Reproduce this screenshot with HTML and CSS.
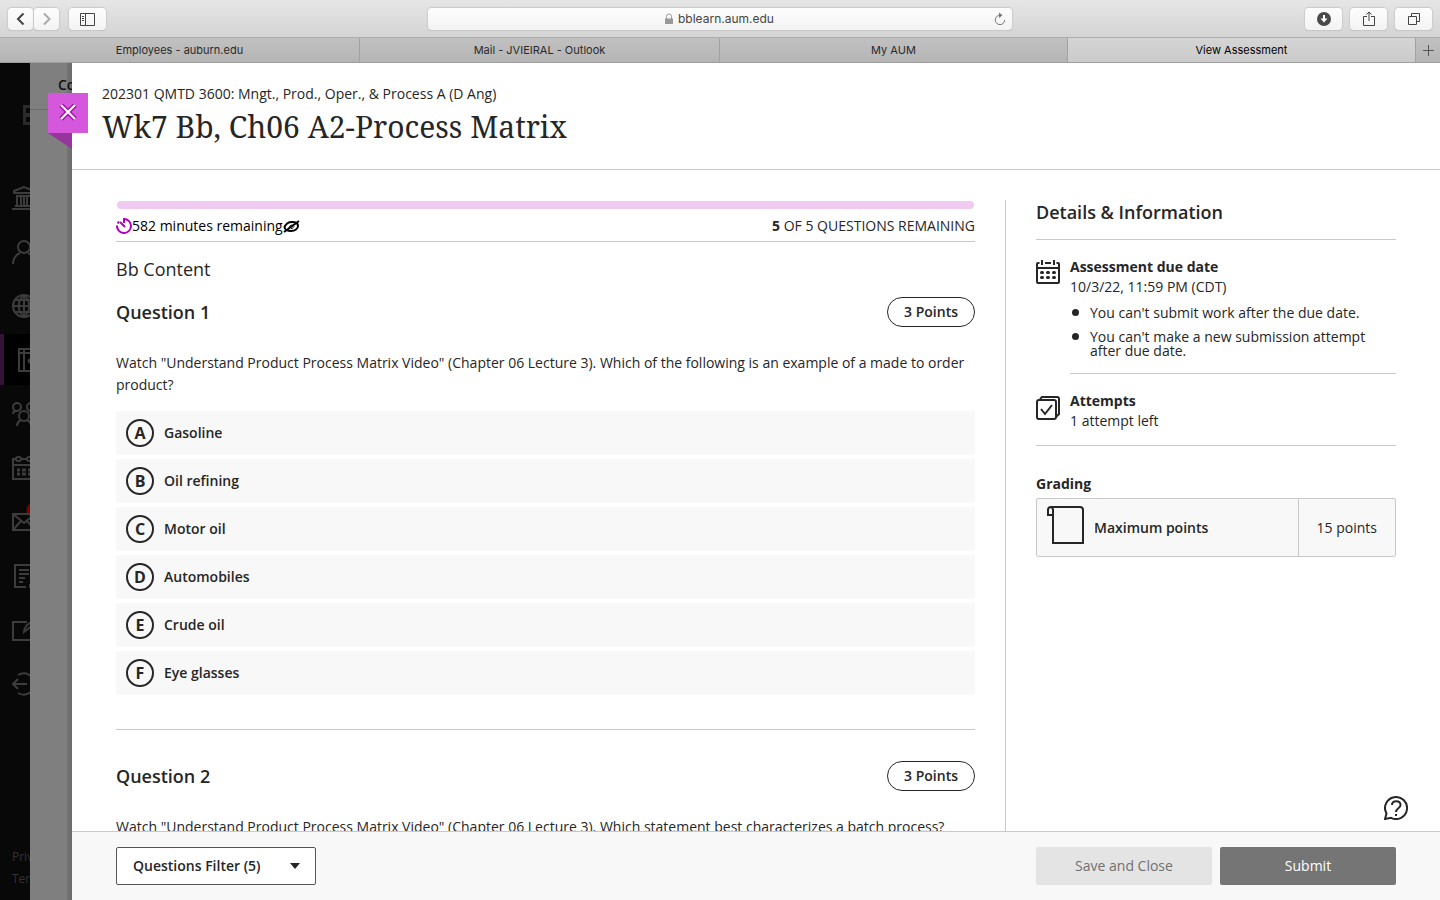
FILE: index.html
```html
<!DOCTYPE html>
<html lang="en">
<head>
  <meta charset="UTF-8">
  <meta name="viewport" content="width=device-width, initial-scale=1">
  <title>View Assessment</title>
  <link rel="stylesheet" href="styles.css">
</head>
<body>

  <!-- Browser chrome -->
  <div class="toolbar">
    <div class="tools">
      <div class="history">
        <button class="tool" aria-label="Back"><svg width="12" height="16" viewBox="0 0 12 16"><path d="M8.500 2.500L3 8L8.500 13.500"/></svg></button>
        <button class="tool forward" aria-label="Forward"><svg width="12" height="16" viewBox="0 0 12 16"><path d="M3 2.500L8.500 8L3 13.500"/></svg></button>
      </div>
      <button class="tool wide" aria-label="Sidebar"><svg class="thin" width="15" height="13" viewBox="0 0 15 13"><path d="M.5 .5h14v12H.5zM5.500 .5v12M2 3.500h2M2 5.500h2M2 7.500h2"/></svg></button>
    </div>
    <div class="address">
      <svg class="lock" width="8" height="12" viewBox="0 0 8 12"><path d="M1.500 6V3.500a2.500 2.500 0 0 1 5 0V6" fill="none" stroke="#999"/><path d="M0 5.500h8V11H0z" fill="#999"/></svg>
      <input class="url" type="text" value="bblearn.aum.edu" aria-label="Address">
      <button class="reload" aria-label="Reload"><svg width="12" height="14" viewBox="0 0 12 14"><path d="M6 3.200a4.700 4.700 0 1 0 4.700 4.700" fill="none" stroke="#777"/><path d="M5 .5L8.500 3.200L5 6z" fill="#777"/></svg></button>
    </div>
    <div class="tools right">
      <button class="tool wide" aria-label="Downloads"><svg width="14" height="14" viewBox="0 0 14 14"><circle cx="7" cy="7" r="7" fill="#4a4a4a" stroke="none"/><path d="M7 3v4" stroke="#fff" stroke-width="2"/><path d="M3.500 6.500h7L7 10.500z" fill="#fff" stroke="none"/></svg></button>
      <button class="tool wide" aria-label="Share"><svg class="thin" width="12" height="16" viewBox="0 0 12 16"><path d="M4 5.500H.5v9h11v-9H8M6 10V1.500M3.500 3.500L6 1l2.500 2.500"/></svg></button>
      <button class="tool wide" aria-label="Tabs"><svg class="thin" width="14" height="14" viewBox="0 0 14 14"><path d="M1.500 4.500h8v8h-8zM4.500 4V1.500h8v8H10"/></svg></button>
    </div>
  </div>
  <nav class="tabs">
    <a href="#" class="tab first">Employees - auburn.edu</a>
    <a href="#" class="tab first">Mail - JVIEIRAL - Outlook</a>
    <a href="#" class="tab">My AUM</a>
    <a href="#" class="tab current">View Assessment</a>
    <button class="new-tab" aria-label="New tab"><svg width="11" height="11" viewBox="0 0 11 11"><path d="M5.500 0v11M0 5.500h11" stroke="#555"/></svg></button>
  </nav>

  <div class="page">
    <aside class="sidebar">
      <svg class="brand" width="24" height="20" viewBox="0 0 24 20"><path d="M0 0h24v20H0z" fill="#2b2b2b"/><path d="M3 3h6v5H3zM3 12h6v5H3z" fill="#080808"/></svg>
      <nav class="menu">
        <a href="#" aria-label="Institution"><svg viewBox="0 0 24 24"><path d="M2 7V5l10-4 10 4v2zM4 10h16M3 20h18M0 23h24M5 10v10M9 10v10M12 10v10M15 10v10M19 10v10"/></svg></a>
        <a href="#" aria-label="Profile"><svg viewBox="0 0 24 24"><circle cx="12" cy="7" r="6"/><path d="M1 24c0-5 3-9 7-11M23 24c0-5-3-9-7-11"/></svg></a>
        <a href="#" aria-label="Activity"><svg viewBox="0 0 24 24"><circle cx="12" cy="12" r="11"/><path d="M1 12h22M12 1v22M3 6h18M3 18h18M12 1c-7 6-7 16 0 22M12 1c7 6 7 16 0 22"/></svg></a>
        <a href="#" class="active" aria-label="Courses"><svg viewBox="0 0 24 24"><path d="M7 1h17v22H7zM7 5h17M12 1v22M18 11h6M18 15h6M16 13l2-2M16 13l2 2"/></svg></a>
        <a href="#" aria-label="Organizations"><svg viewBox="0 0 24 24"><circle cx="5" cy="5" r="4"/><circle cx="19" cy="5" r="4"/><circle cx="12" cy="14" r="5"/><path d="M1 12c0-2 1-3 3-3M23 12c0-2-1-3-3-3M5 24c0-3 2-5 4-6M19 24c0-3-2-5-4-6"/></svg></a>
        <a href="#" aria-label="Calendar"><svg viewBox="0 0 24 24"><path d="M4 3H1v20h22V3h-3M9 3h6M1 9h22"/><rect x="4" y="1" width="5" height="4" rx="2"/><rect x="15" y="1" width="5" height="4" rx="2"/><path d="M5 14h3M10 14h4M16 14h3M5 18h3M10 18h4M16 18h3" stroke-width="3"/></svg></a>
        <a href="#" class="mail" aria-label="Messages"><svg viewBox="0 0 24 24"><path d="M1 4h22v16H1zM1 4l11 9L23 4M1 20l8-9M23 20l-8-9"/></svg></a>
        <a href="#" aria-label="Grades"><svg viewBox="0 0 24 24"><path d="M14 23H3V1h18v16M7 6h10M7 10h10M7 14h6M7 18h4"/><path d="M18 24v-3h6"/></svg></a>
        <a href="#" aria-label="Tools"><svg viewBox="0 0 24 24"><path d="M15 4H1v18h22V10M12 14c0-3 1-4 3-7l7-5 2 2-7 6z"/></svg></a>
        <a href="#" aria-label="Sign out"><svg viewBox="0 0 24 24"><path d="M1 12h14M6 7l-5 5 5 5M6 3c7-4 16 0 16 9s-9 13-16 9"/></svg></a>
      </nav>
      <div class="legal">
        <a href="#">Privacy</a>
        <a href="#">Terms</a>
      </div>
    </aside>

    <div class="backdrop">
      <span class="behind">Courses</span>
    </div>

    <div class="panel">
      <button class="close" aria-label="Close"><svg width="18" height="18" viewBox="0 0 18 18"><path d="M2 1l14 14M16 1L2 15" stroke="#a513b0" stroke-width="5"/><path d="M2 1l14 14M16 1L2 15" stroke="#fff" stroke-width="2"/></svg></button>

      <header class="panel-header">
        <div class="course">202301 QMTD 3600: Mngt., Prod., Oper., &amp; Process A (D Ang)</div>
        <h1>Wk7 Bb, Ch06 A2-Process Matrix</h1>
      </header>

      <div class="content">
        <main>
          <div class="progress"></div>
          <div class="status">
            <div class="timer">
              <svg width="16" height="16" viewBox="0 0 16 16" fill="none" stroke="#b100bd" stroke-width="2"><path d="M8 5V1A7 7 0 1 1 1 7.500"/><path d="M1.500 5.500L3 3.500"/><path d="M4 4l5 5"/></svg>
              <span>582 minutes remaining</span>
              <svg width="17" height="14" viewBox="0 0 17 14" fill="none" stroke="#000" stroke-width="2"><path d="M1.500 8C3 4.500 6 3 9 3c3.500 0 6 1.500 6 4s-3 5-7 5c-3.500 0-6.500-1.500-6.500-4z"/><path d="M1 13L16 2"/><path d="M6 8.500c.5-1.500 1.500-2.500 3.500-2.500M8 9.500c1.500 0 2.500-1 3-2" stroke-width="1"/></svg>
            </div>
            <div><strong>5</strong> OF 5 QUESTIONS REMAINING</div>
          </div>
          <h2 class="section-name">Bb Content</h2>

          <section class="question">
            <div class="question-head">
              <h3>Question 1</h3>
              <span class="points">3 Points</span>
            </div>
            <p>Watch "Understand Product Process Matrix Video" (Chapter 06 Lecture 3). Which of the following is an example of a made to order product?</p>
            <div class="answers">
              <button class="answer"><span class="letter">A</span>Gasoline</button>
              <button class="answer"><span class="letter">B</span>Oil refining</button>
              <button class="answer"><span class="letter">C</span>Motor oil</button>
              <button class="answer"><span class="letter">D</span>Automobiles</button>
              <button class="answer"><span class="letter">E</span>Crude oil</button>
              <button class="answer"><span class="letter">F</span>Eye glasses</button>
            </div>
          </section>

          <section class="question">
            <div class="question-head">
              <h3>Question 2</h3>
              <span class="points">3 Points</span>
            </div>
            <p>Watch "Understand Product Process Matrix Video" (Chapter 06 Lecture 3). Which statement best characterizes a batch process?</p>
          </section>
        </main>

        <aside class="details">
          <h2>Details &amp; Information</h2>
          <div class="detail">
            <svg width="24" height="24" viewBox="0 0 24 24" fill="none" stroke="#262626" stroke-width="2"><path d="M3.500 3H2a1 1 0 0 0-1 1v18a1 1 0 0 0 1 1h20a1 1 0 0 0 1-1V4a1 1 0 0 0-1-1h-1.500M9 3h6M1 8h22M6 0v5M18 0v5"/><path d="M5.500 12.500h1M11.500 12.500h1M17.500 12.500h1M5.500 17.500h1M11.500 17.500h1M17.500 17.500h1" stroke-width="3" stroke-linecap="round"/></svg>
            <div class="detail-text ruled">
              <h4>Assessment due date</h4>
              <div>10/3/22, 11:59 PM (CDT)</div>
              <ul>
                <li>You can't submit work after the due date.</li>
                <li>You can't make a new submission attempt after due date.</li>
              </ul>
            </div>
          </div>
          <div class="detail attempts">
            <svg width="24" height="24" viewBox="0 0 24 24" fill="none" stroke="#262626" stroke-width="2"><rect x="1" y="4" width="19" height="19" rx="2"/><path d="M4 3l2-2h15a2 2 0 0 1 2 2v15l-3 3"/><path d="M5 13l4 5 7-9"/></svg>
            <div class="detail-text">
              <h4>Attempts</h4>
              <div>1 attempt left</div>
            </div>
          </div>
          <h4 class="grading-title">Grading</h4>
          <div class="grading">
            <div class="grading-label">
              <svg width="37" height="38" viewBox="0 0 37 38" fill="none" stroke="#262626" stroke-width="2"><path d="M6 9H1V4a3 3 0 0 1 3-3h29a3 3 0 0 1 3 3v33H6V4a3 3 0 0 0-2-3"/></svg>
              Maximum points
            </div>
            <div class="grading-value">15 points</div>
          </div>
        </aside>
        <button class="help" aria-label="Help"><svg width="24" height="24" viewBox="0 0 24 24" fill="none" stroke="#262626" stroke-width="2"><path d="M1 23l1.500-5.500A11 11 0 1 1 7 21.800z"/><path d="M8 9c0-5 8.500-5 8.500 0 0 3.500-4.500 3-4.500 7M12 18v2"/></svg></button>
      </div>

      <footer>
        <div class="filter">
          <select aria-label="Questions Filter">
            <option>Questions Filter (5)</option>
          </select>
          <svg width="10" height="6" viewBox="0 0 10 6"><path d="M0 0h10L5 6z" fill="#262626"/></svg>
        </div>
        <div class="actions">
          <button class="save">Save and Close</button>
          <button class="submit">Submit</button>
        </div>
      </footer>
    </div>
  </div>

</body>
</html>
```
FILE: styles.css
```css
* {
  box-sizing: border-box;
}
body {
  margin: 0;
  height: 100vh;
  display: flex;
  flex-direction: column;
  overflow: hidden;
  font-family: "Open Sans", "Noto Sans", sans-serif;
  font-size: 14px;
  line-height: 20px;
  color: #262626;
  background: #fff;
}
button, select, input {
  font: inherit;
  color: inherit;
  margin: 0;
  padding: 0;
  border: none;
  background: none;
}
button {
  cursor: pointer;
}
a {
  color: inherit;
  text-decoration: none;
}
svg {
  display: block;
  flex-shrink: 0;
}
h1, h2, h3, h4, p, ul {
  margin: 0;
  padding: 0;
}
h4 {
  font-size: 14px;
  font-weight: 700;
}

/* Browser chrome */
.toolbar {
  display: grid;
  grid-template-columns: 1fr 41% 1fr;
  align-items: center;
  height: 38px;
  padding: 1px 8px 0;
  background: linear-gradient(#e6e6e6, #d4d4d4);
  border-bottom: 1px solid #adadad;
  font-family: Inter, sans-serif;
  flex-shrink: 0;
}
.tools {
  display: flex;
  gap: 8px;
}
.tools.right {
  justify-content: flex-end;
}
.history {
  display: flex;
  gap: 1px;
  margin-right: 2px;
}
.tool {
  display: flex;
  align-items: center;
  justify-content: center;
  width: 25px;
  height: 22px;
  border-radius: 4px;
  background: linear-gradient(#fdfdfd, #f3f3f3);
  box-shadow: 0 0 1px 1px #cbcbcb, 0 1px 0 #b0b0b0;
}
.tool.wide {
  width: 37px;
}
.tool svg {
  fill: none;
  stroke: #444;
  stroke-width: 2;
}
.tool.forward svg {
  stroke: #aaa;
}
.tool svg.thin {
  stroke-width: 1;
}
.address {
  position: relative;
  display: flex;
  align-items: center;
  justify-content: center;
  gap: 5px;
  height: 22px;
  border-radius: 4px;
  background: linear-gradient(#fdfdfd, #f3f3f3);
  box-shadow: 0 0 1px 1px #cbcbcb, 0 1px 0 #b0b0b0;
}
.url {
  width: 97px;
  font-size: 12px;
  color: #444;
}
.reload {
  position: absolute;
  right: 6px;
  top: 4px;
}
.tabs {
  display: flex;
  height: 25px;
  flex-shrink: 0;
  background: linear-gradient(#c1c1c1, #b5b5b5);
  border-bottom: 1px solid #9d9d9d;
  font-family: Inter, sans-serif;
  font-size: 11px;
  line-height: 24px;
  color: #2a2a2a;
  text-align: center;
}
.tab {
  flex: 348 1 0;
  border-right: 1px solid #a2a2a2;
}
.tab.first {
  flex-grow: 360;
}
.tab.current {
  background: linear-gradient(#d5d5d5, #cbcbcb);
  color: #000;
}
.new-tab {
  display: flex;
  align-items: center;
  justify-content: center;
  width: 24px;
}

/* Page behind the panel */
.page {
  flex: 1;
  min-height: 0;
  display: grid;
  grid-template-columns: 30px 42px minmax(0, 1fr);
}
.sidebar {
  display: flex;
  flex-direction: column;
  overflow: hidden;
  background: #080808;
  color: #333;
}
.brand {
  margin: 42px 0 0 23px;
}
.menu {
  display: flex;
  flex-direction: column;
  gap: 3px;
  margin-top: 47px;
}
.menu a {
  display: flex;
  align-items: center;
  height: 51px;
  padding-left: 12px;
}
.menu svg {
  width: 24px;
  height: 24px;
  fill: none;
  stroke: #3c3c3c;
  stroke-width: 2;
}
.menu .active {
  background: #000;
  border-left: 4px solid #34123a;
  padding-left: 8px;
}
.menu .mail {
  background: radial-gradient(circle at 34px 14px, #7a0000 7px, transparent 8px);
}
.legal {
  display: flex;
  flex-direction: column;
  margin-top: auto;
  padding: 0 0 10px 12px;
  font-size: 12px;
  line-height: 22px;
}
.backdrop {
  overflow: hidden;
  background: linear-gradient(90deg, #7f7f7f 37px, #737373 37px, #6c6c6c);
}
.behind {
  display: block;
  height: 47px;
  padding: 12px 0 0 28px;
  border-bottom: 1px solid #6c6c6c;
  font-weight: 600;
  color: #111;
}

/* Assessment panel */
.panel {
  position: relative;
  display: flex;
  flex-direction: column;
  min-height: 0;
  background: #fff;
}
.close {
  position: absolute;
  left: -24px;
  top: 30px;
  display: flex;
  align-items: center;
  justify-content: center;
  width: 40px;
  height: 40px;
  background: #d558dc;
}
.close::after {
  content: "";
  position: absolute;
  left: 0;
  top: 40px;
  border-top: 16px solid #96369c;
  border-left: 24px solid transparent;
}
.panel-header {
  padding: 20px 30px;
  border-bottom: 1px solid #c9c9c9;
}
.course {
  line-height: 22px;
}
.panel-header h1 {
  font-family: "Noto Serif", "Droid Serif", "DejaVu Serif", serif;
  font-size: 30px;
  font-weight: 400;
  line-height: 44px;
}
.content {
  position: relative;
  flex: 1;
  min-height: 0;
  display: grid;
  grid-template-columns: minmax(0, 1fr) 391px;
  column-gap: 30px;
  padding: 30px 44px 0;
  overflow: hidden;
}
.progress {
  height: 8px;
  margin: 1px;
  border-radius: 4px;
  background: #f1caf2;
}
.status {
  display: flex;
  justify-content: space-between;
  align-items: center;
  height: 32px;
  border-bottom: 1px solid #c9c9c9;
}
.timer {
  display: flex;
  align-items: center;
  color: #000;
}
.section-name {
  margin: 14px 0 15px;
  font-size: 18px;
  font-weight: 400;
  line-height: 26px;
}
.question + .question {
  margin-top: 34px;
  padding-top: 31px;
  border-top: 1px solid #c9c9c9;
}
.question-head {
  display: flex;
  justify-content: space-between;
  align-items: center;
}
.question-head h3 {
  font-size: 18px;
  font-weight: 600;
}
.points {
  padding: 4px 16px;
  border: 1px solid #262626;
  border-radius: 15px;
  font-weight: 600;
}
.question p {
  margin-top: 25px;
  line-height: 22px;
}
.answers {
  display: flex;
  flex-direction: column;
  gap: 4px;
  margin-top: 15px;
}
.answer {
  display: flex;
  align-items: center;
  gap: 10px;
  height: 44px;
  padding: 0 10px;
  border-radius: 2px;
  background: #f8f8f8;
  font-weight: 600;
}
.letter {
  width: 28px;
  height: 28px;
  border: 2px solid #262626;
  border-radius: 50%;
  font-size: 16px;
  font-weight: 700;
  line-height: 24px;
  text-align: center;
}

/* Details column */
.details {
  padding-left: 30px;
  border-left: 1px solid #c9c9c9;
}
.details h2 {
  padding-bottom: 15px;
  border-bottom: 1px solid #c9c9c9;
  font-size: 18px;
  font-weight: 600;
  line-height: 24px;
}
.detail {
  display: flex;
  gap: 10px;
  padding-top: 17px;
}
.detail > svg {
  margin-top: 3px;
}
.detail-text {
  flex: 1;
}
.detail-text.ruled {
  padding-bottom: 15px;
  border-bottom: 1px solid #c9c9c9;
}
.detail ul {
  margin-top: 9px;
  padding-left: 20px;
  line-height: 14px;
  list-style: none;
}
.detail li {
  position: relative;
}
.detail li::before {
  content: "";
  position: absolute;
  left: -18px;
  top: 3px;
  width: 7px;
  height: 7px;
  border-radius: 50%;
  background: #262626;
}
.detail li + li {
  margin-top: 10px;
}
.attempts {
  padding-bottom: 14px;
  border-bottom: 1px solid #c9c9c9;
}
.attempts > svg {
  margin-top: 5px;
}
.grading-title {
  margin: 28px 0 4px;
}
.grading {
  display: flex;
  height: 59px;
  border: 1px solid #c9c9c9;
  border-radius: 2px;
  background: #f8f8f8;
}
.grading-label {
  flex: 1;
  display: flex;
  align-items: center;
  gap: 10px;
  padding-left: 10px;
  font-weight: 600;
}
.grading-label svg {
  margin-bottom: 6px;
}
.grading-value {
  display: flex;
  align-items: center;
  padding: 0 18px;
  border-left: 1px solid #c9c9c9;
}
.help {
  position: absolute;
  right: 32px;
  bottom: 11px;
}

footer {
  display: flex;
  justify-content: space-between;
  padding: 15px 44px;
  border-top: 1px solid #c9c9c9;
  background: #f8f8f8;
}
.filter {
  position: relative;
}
.filter select {
  appearance: none;
  width: 200px;
  height: 38px;
  padding: 0 16px;
  border: 1px solid #555;
  border-radius: 2px;
  background: #fff;
  font-weight: 600;
}
.filter svg {
  position: absolute;
  right: 16px;
  top: 16px;
  pointer-events: none;
}
.actions {
  display: flex;
  gap: 8px;
}
.actions button {
  width: 176px;
  height: 38px;
  border-radius: 2px;
}
.save {
  background: #e4e4e4;
  color: #707070;
}
.submit {
  background: #757575;
  color: #fff;
}
```
